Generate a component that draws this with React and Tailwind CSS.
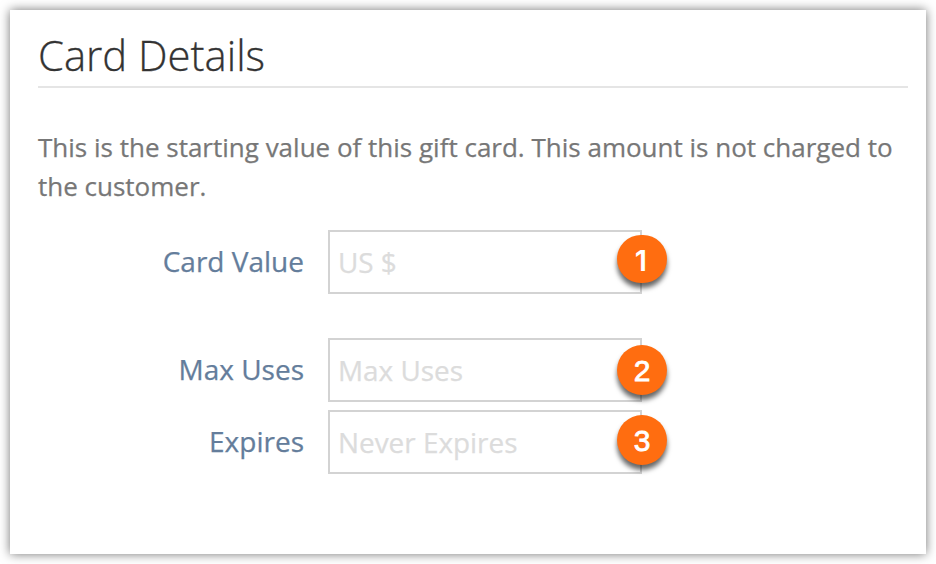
import React, { useState } from 'react';

const fields = [
  { id: 'cardValue', label: 'Card Value', placeholder: 'US $', step: '1', row: 'mb-11', badge: "top-[5px] h-12 pt-[3px] pr-0.5 font-['Inter',sans-serif] text-[29px] font-semibold" },
  { id: 'maxUses', label: 'Max Uses', placeholder: 'Max Uses', step: '2', row: 'mb-2', badge: "top-[7px] h-[50px] pt-0.5 font-['Liberation_Sans',sans-serif] text-[30px] [-webkit-text-stroke:0.8px_white]" },
  { id: 'expires', label: 'Expires', placeholder: 'Never Expires', step: '3', row: '', badge: "top-[5px] h-[50px] pt-0.5 font-['Liberation_Sans',sans-serif] text-[30px] [-webkit-text-stroke:0.8px_white]" },
];

function Field({ field, value, onChange }) {
  return (
    <div className={`flex h-16 items-center ${field.row}`}>
      <label htmlFor={field.id} className="w-[266px] pb-0.5 text-right text-[28px] leading-9 text-[#647d9b] [-webkit-text-stroke:0.25px_#647d9b]">
        {field.label}
      </label>
      <div className="relative ml-6 h-16 w-[314px]">
        <input
          type="text"
          id={field.id}
          value={value}
          onChange={onChange}
          placeholder={field.placeholder}
          className="h-16 w-full border-2 border-[#d3d3d3] bg-white px-2 text-[27.9px] text-[#555555] placeholder:text-[#dcdcdc] placeholder:[-webkit-text-stroke:0.25px_#dcdcdc] focus:outline-none"
        />
        {/* Step number on the right edge of the input */}
        <span
          className={`absolute left-[289px] flex w-[50px] items-center justify-center rounded-full bg-[#ff6d10] leading-none text-white shadow-[0_5px_5px_rgba(0,0,0,0.6)] ${field.badge}`}
        >
          {field.step}
        </span>
      </div>
    </div>
  );
}

function App() {
  const [values, setValues] = useState({ cardValue: '', maxUses: '', expires: '' });

  return (
    <div className="h-[564px] w-[936px] overflow-hidden bg-white px-2.5 pt-2.5 font-['Open_Sans',sans-serif]">
      <div className="h-[544px] w-[916px] bg-white pl-7 pr-[18px] pt-4 shadow-[0_0_10px_rgba(0,0,0,0.55)]">
        <h2 className="h-[62px] border-b-2 border-[#e5e5e5] text-[41.8px] font-light leading-[58px] text-[#333333] [-webkit-text-stroke:0.3px_#333333]">
          Card Details
        </h2>
        <p className="mb-6 mt-10 text-[26px] leading-[39px] text-[#777777] [-webkit-text-stroke:0.25px_#777777]">
          This is the starting value of this gift card. This amount is not charged to
          the customer.
        </p>
        <form>
          {fields.map((field) => (
            <Field
              key={field.id}
              field={field}
              value={values[field.id]}
              onChange={(e) => setValues({ ...values, [field.id]: e.target.value })}
            />
          ))}
        </form>
      </div>
    </div>
  );
}

export default App;
